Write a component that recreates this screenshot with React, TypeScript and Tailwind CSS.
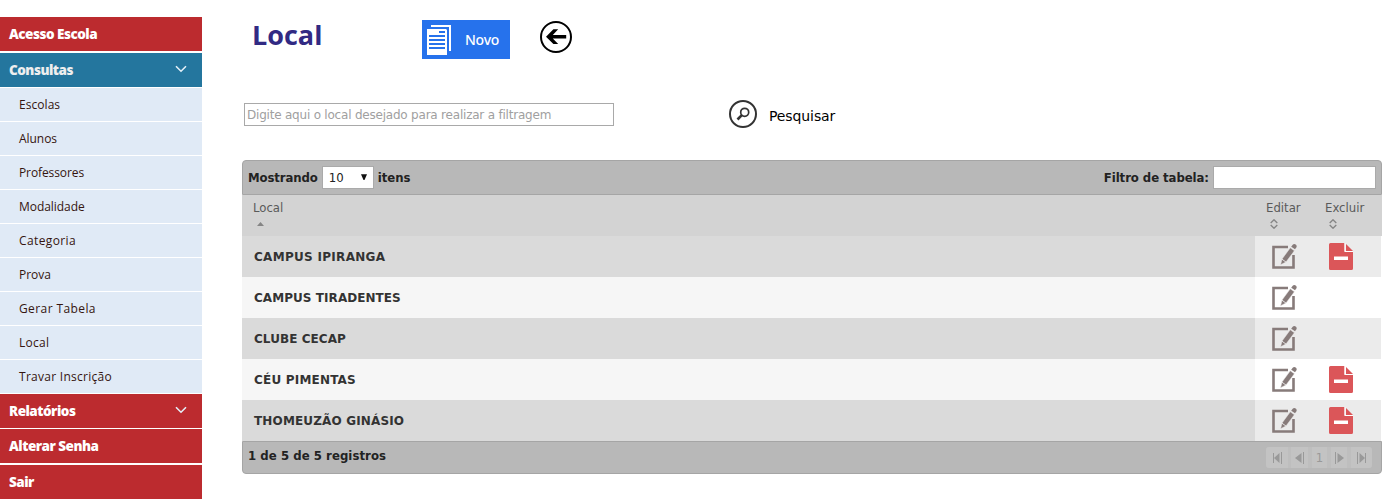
import React from "react";

const subItems = [
  { label: "Escolas", tracking: "tracking-[0.05px]" },
  { label: "Alunos", tracking: "tracking-[-0.05px]" },
  { label: "Professores", tracking: "tracking-[-0.1px]" },
  { label: "Modalidade", tracking: "tracking-[-0.05px]" },
  { label: "Categoria", tracking: "tracking-[0.38px]" },
  { label: "Prova", tracking: "tracking-[-0.05px]" },
  { label: "Gerar Tabela", tracking: "tracking-[0.4px]" },
  { label: "Local", tracking: "tracking-[0.25px]" },
  { label: "Travar Inscrição", tracking: "tracking-[0.27px]" },
];

const rows = [
  { name: "CAMPUS IPIRANGA", removable: true, tracking: "tracking-[0.3px]" },
  { name: "CAMPUS TIRADENTES", removable: false, tracking: "tracking-[0.06px]" },
  { name: "CLUBE CECAP", removable: false, tracking: "tracking-[0.06px]" },
  { name: "CÉU PIMENTAS", removable: true, tracking: "tracking-[0.2px]" },
  { name: "THOMEUZÃO GINÁSIO", removable: true, tracking: "tracking-[0.15px]" },
];

function Chevron() {
  return (
    <svg className="-mt-[2px]" width="12" height="8" viewBox="0 0 12 8" fill="none" stroke="#e4f0f8" strokeWidth="1.6">
      <path d="M1 1.2 6 6.2 11 1.2" />
    </svg>
  );
}

function MenuItem({ label, arrow, active, className = "" }: { label: string; arrow?: boolean; active?: boolean; className?: string }) {
  return (
    <a
      className={`flex h-[34px] shrink-0 items-center justify-between pl-[9px] pr-[15px] text-[13.5px] font-extrabold tracking-[-0.5px] ${active ? "bg-[#24769e] text-[#eeeeee]" : "bg-[#bc2b2f] text-white"} ${className}`}
    >
      <span className="pt-px">{label}</span>
      {arrow && <Chevron />}
    </a>
  );
}

function EditIcon() {
  return (
    <svg width="25" height="27" viewBox="0 0 25 27">
      <path d="M16 4H1.5v20.5h20V12" fill="none" stroke="#877b7a" strokeWidth="2.6" />
      <path d="M8.6 21.8 10 16 18.3 4.8 22.4 7.8 14 19Z" fill="#877b7a" stroke="#f0efef" strokeWidth=".5" />
      <path d="m19.2 3.8 1.5-2Q22.2.3 24 1.8q1.1 1.2.4 2.4l-1.4 2Z" fill="#877b7a" />
      <path d="m10 16.2 4 2.9" stroke="#efefef" strokeWidth=".9" />
    </svg>
  );
}

function DeleteIcon() {
  return (
    <svg width="24" height="27" viewBox="0 0 24 27">
      <path d="M1.5 0H15.5V9H24v16.5q0 1.5-1.5 1.5h-21Q0 27 0 25.5v-24Q0 0 1.5 0Z" fill="#db5659" />
      <path d="M16 0v8.5h8" fill="none" stroke="#fff" strokeWidth="1" />
      <path d="M17 1v7h7Z" fill="#db5659" />
      <path d="M5 13.5h14v3.5H5z" fill="#fff" />
    </svg>
  );
}

function SortIcon() {
  return (
    <svg width="8" height="10" viewBox="0 0 8 10" fill="none" stroke="#858585" strokeWidth="1.4">
      <path d="M.7 3.9 4 .8l3.3 3.1M.7 6.1 4 9.2l3.3-3.1" />
    </svg>
  );
}

function PagerIcon({ d, bars }: { d: string; bars: string }) {
  return (
    <svg width="11" height="12" viewBox="0 0 11 12">
      <path d={d} fill="#999" />
      <path d={bars} stroke="#999" strokeWidth="1" fill="none" />
    </svg>
  );
}

export default function App() {
  return (
    <div className="flex h-[503px] w-[1395px] overflow-hidden bg-white">
      <nav className="flex w-[202px] shrink-0 flex-col pt-[17px] font-['Open_Sans',sans-serif]">
        <MenuItem label="Acesso Escola" />
        <MenuItem label="Consultas" arrow active className="mt-[2px]" />
        <div className="mt-px flex flex-col gap-px pb-px">
          {subItems.map((s) => (
            <a key={s.label} className={`flex h-[33px] items-center bg-[#e0eaf6] pl-[19px] text-[12px] text-[#35150f] ${s.tracking}`}>
              {s.label}
            </a>
          ))}
        </div>
        <MenuItem label="Relatórios" arrow />
        <MenuItem label="Alterar Senha" className="mt-px" />
        <MenuItem label="Sair" className="mt-[2px]" />
      </nav>

      <main className="ml-[40px] flex w-[1140px] shrink-0 flex-col font-['DejaVu_Sans_Condensed','DejaVu_Sans',sans-serif]">
        <header className="flex h-[59px] items-start pl-[10px] pt-5">
          <h1 className="w-[170px] font-['Open_Sans',sans-serif] text-[27px] font-bold leading-[30px] text-[#312a83]">Local</h1>
          <button className="flex h-[39px] w-[88px] items-center bg-[#2672ec] pl-[5px] text-left">
            <svg width="24" height="31" viewBox="0 0 24 31">
              <path d="M4 2h19v25" fill="none" stroke="#fff" strokeWidth="2" />
              <path d="M0 5h19l1 1v25H0z" fill="#fff" />
              <path d="M12 8h6M2 12h16M2 16h16M2 20h16M2 24h16" stroke="#2672ec" strokeWidth="2" />
            </svg>
            <span className="ml-[14px] font-['Noto_Sans',sans-serif] text-[14px] font-medium tracking-[-0.25px] text-white">Novo</span>
          </button>
          <svg className="ml-[30px] mt-px" width="32" height="32" viewBox="0 0 32 32">
            <circle cx="16" cy="16" r="15" fill="none" stroke="#000" strokeWidth="2" />
            <path d="M6 15.7 13.4 8.3H18.2L12.8 14H26.2V17.4H12.8L18.2 23H13.4Z" fill="#000" />
          </svg>
        </header>

        <section className="mt-[41px] flex h-[28px] items-start pl-[2px]">
          <input
            className="mt-[3px] h-[23px] w-[370px] border border-[#a9a9a9] px-[2px] font-['DejaVu_Sans',sans-serif] text-[12px] tracking-[-0.21px] text-[#333] outline-none placeholder:text-[#a0a0a0] placeholder:opacity-100"
            placeholder="Digite aqui o local desejado para realizar a filtragem"
          />
          <svg className="ml-[115px]" width="28" height="28" viewBox="0 0 28 28" fill="none" stroke="#333">
            <circle cx="14" cy="14" r="13" strokeWidth="2" />
            <circle cx="15.7" cy="12.3" r="4" strokeWidth="1.7" />
            <path d="m12.8 15.2-4.3 4.3" strokeWidth="2.6" />
          </svg>
          <span className="ml-[12px] mt-[6px] font-['DejaVu_Sans',sans-serif] text-[14px] leading-5 tracking-[-0.1px] text-black">Pesquisar</span>
        </section>

        <section className="mt-8 flex flex-col">
          <div className="flex h-[35px] items-center justify-between rounded-t-[4px] border border-[#a5a5a5] bg-[#b8b8b8] px-[5px] text-[13px] font-bold text-[#222]">
            <div className="flex items-center">
              <span className="tracking-[-0.1px]">Mostrando</span>
              <div className="mx-1 flex h-[23px] w-[52px] items-center justify-between border border-[#aaa] bg-white pl-[6px] pr-[6px] text-[13px] font-normal">
                <span>10</span>
                <svg className="-mt-px" width="6" height="6" viewBox="0 0 6 6"><path d="M0 .3h6L3.5 6h-1Z" fill="#111" /></svg>
              </div>
              <span>itens</span>
            </div>
            <label className="flex items-center gap-[4px]">
              <span className="tracking-[-0.06px]">Filtro de tabela:</span>
              <input className="h-[23px] w-[163px] border border-[#aaa] bg-white px-1 font-normal outline-none" />
            </label>
          </div>

          <div className="grid h-[41px] grid-cols-[1013px_59px_68px] bg-[#d3d3d3] pt-[5px] text-[13px] leading-4 text-[#5a5a5a]">
            <div className="pl-[11px]">
              Local
              <svg className="ml-[4px] mt-[6px]" width="7" height="4" viewBox="0 0 7 4"><path d="M0 4 3.5 0 7 4Z" fill="#858585" /></svg>
            </div>
            <div className="pl-[11px]">Editar<div className="mt-[3px] pl-[4px]"><SortIcon /></div></div>
            <div className="pl-[11px]">Excluir<div className="mt-[3px] pl-[4px]"><SortIcon /></div></div>
          </div>

          {rows.map((r, i) => (
            <div key={r.name} className="grid h-[41px] w-[1139px] grid-cols-[1013px_59px_67px]">
              <div className={`flex items-center pl-3 font-['DejaVu_Sans',sans-serif] text-[12px] font-bold text-[#333] ${r.tracking} ${i % 2 ? "bg-[#f6f6f6]" : "bg-[#dadada]"}`}>{r.name}</div>
              <div className={`flex items-center pl-[17px] ${i % 2 ? "bg-white" : "bg-[#ebebeb]"}`}><EditIcon /></div>
              <div className={`flex items-center pl-[15px] ${i % 2 ? "bg-white" : "bg-[#ebebeb]"}`}>{r.removable && <DeleteIcon />}</div>
            </div>
          ))}

          <footer className="flex h-[33px] items-center justify-between rounded-b-[4px] border border-[#a5a5a5] bg-[#b8b8b8] pl-[5px] pr-[9px] text-[13px] font-bold text-[#222]">
            <span className="-mt-1 tracking-[0.06px]">1 de 5 de 5 registros</span>
            <div className="flex h-[21px] overflow-hidden rounded-[3px] bg-[#bebebe] text-[13px] font-normal text-[#999]">
              <span className="flex w-[22px] items-center justify-center bg-[#c3c3c3]"><PagerIcon d="M7.5 1v10L2 6Z" bars="M1.5 1v10M9.5 0v12" /></span>
              <span className="ml-[3px] flex w-[17px] items-center justify-center bg-[#c3c3c3]"><PagerIcon d="M7.5 1v10L1 6Z" bars="M9.5 0v12" /></span>
              <span className="ml-[4px] flex w-[15px] items-center justify-center bg-[#c3c3c3]">1</span>
              <span className="ml-[4px] flex w-[16px] items-center justify-center bg-[#c3c3c3]"><PagerIcon d="M3.5 1v10L10 6Z" bars="M1.5 0v12" /></span>
              <span className="ml-[4px] flex w-[21px] items-center justify-center bg-[#c3c3c3]"><PagerIcon d="M3.5 1v10L9 6Z" bars="M1.5 0v12M9.5 1v10" /></span>
            </div>
          </footer>
        </section>
      </main>
    </div>
  );
}
